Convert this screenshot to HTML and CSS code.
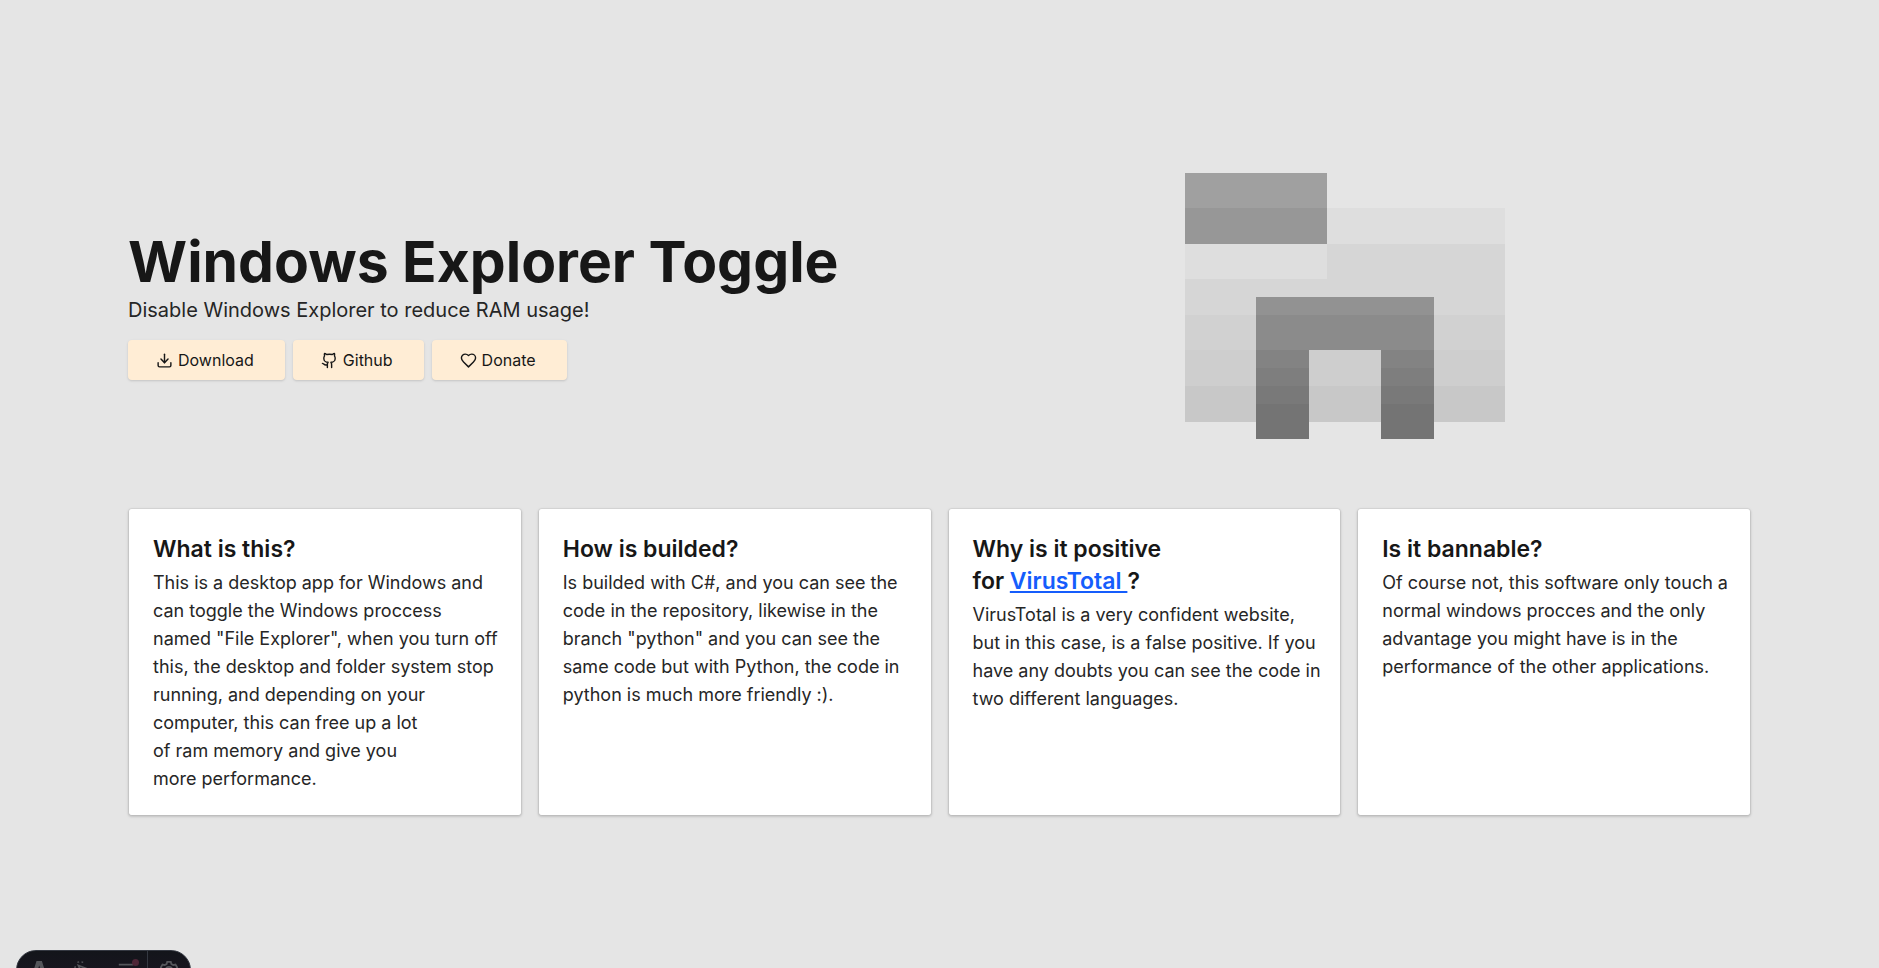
FILE: index.html
```html
<!DOCTYPE html>
<html lang="en">
<head>
<meta charset="UTF-8" />
<meta name="viewport" content="width=device-width, initial-scale=1" />
<title>Windows Explorer Toggle</title>
<link rel="stylesheet" href="styles.css">
</head>
<body>

<main>
  <section class="hero">
    <div class="intro">
      <h1>Windows Explorer Toggle</h1>
      <p>Disable Windows Explorer to reduce RAM usage!</p>
      <div class="actions">
        <button type="button">
          <svg viewBox="0 0 24 24" aria-hidden="true"><path d="M21 15v4a2 2 0 0 1-2 2H5a2 2 0 0 1-2-2v-4" /><path d="m7 10 5 5 5-5" /><path d="M12 15V3" /></svg>
          Download
        </button>
        <button type="button">
          <svg viewBox="0 0 24 24" aria-hidden="true"><path d="M15 22v-4a4.8 4.8 0 0 0-1-3.5c3 0 6-2 6-5.5.08-1.25-.27-2.48-1-3.5.28-1.15.28-2.35 0-3.5 0 0-1 0-3 1.5-2.64-.5-5.36-.5-8 0C6 2 5 2 5 2c-.3 1.15-.3 2.35 0 3.5A5.4 5.4 0 0 0 4 9c0 3.5 3 5.5 6 5.5-.39.49-.68 1.05-.85 1.65-.17.6-.22 1.23-.15 1.85v4" /><path d="M9 18c-4.51 2-5-2-7-2" /></svg>
          Github
        </button>
        <button type="button">
          <svg viewBox="0 0 24 24" aria-hidden="true"><path d="M19 14c1.49-1.46 3-3.21 3-5.5A5.5 5.5 0 0 0 16.5 3c-1.76 0-3 .5-4.5 2-1.5-1.5-2.74-2-4.5-2A5.5 5.5 0 0 0 2 8.5c0 2.3 1.5 4.05 3 5.5l7 7Z" /></svg>
          Donate
        </button>
      </div>
    </div>

    <!-- pixel folder, one unit per pixel -->
    <svg class="folder" viewBox="0 -1.5 18 18" shape-rendering="crispEdges" aria-hidden="true">
      <path fill="#dedede" d="M0 2h18v4H0z" />
      <path fill="#d6d6d6" d="M8 4h10v4H0V6h8z" />
      <path fill="#d1d1d1" d="M0 8h18v2H0z" />
      <path fill="#cecece" d="M0 10h18v2H0z" />
      <path fill="#c8c8c8" d="M0 12h18v2H0z" />
      <path fill="#a0a0a0" d="M0 0h8v2H0z" />
      <path fill="#979797" d="M0 2h8v2H0z" />
      <path fill="#929292" d="M4 7h10v1H4z" />
      <path fill="#8b8b8b" d="M4 8h10v2H4z" />
      <path fill="#838383" d="M4 10h3v1H4zM11 10h3v1h-3z" />
      <path fill="#7e7e7e" d="M4 11h3v1H4zM11 11h3v1h-3z" />
      <path fill="#797979" d="M4 12h3v1H4zM11 12h3v1h-3z" />
      <path fill="#747474" d="M4 13h3v2H4zM11 13h3v2h-3z" />
    </svg>
  </section>

  <section class="cards">
    <article class="card">
      <h2>What is this?</h2>
      <p>This is a desktop app for Windows and can toggle the Windows proccess named "File Explorer", when you turn off this, the desktop and folder system stop running, and depending on your computer, this can free up a lot of&nbsp;ram&nbsp;memory and give you more&nbsp;performance.</p>
    </article>
    <article class="card">
      <h2>How is builded?</h2>
      <p>Is builded with C#, and you can see the code in the repository, likewise in the branch "python" and you can see the same code but with Python, the code in python is much more friendly :).</p>
    </article>
    <article class="card">
      <h2>Why is it positive for&nbsp;<a href="#">VirusTotal&nbsp;</a>?</h2>
      <p>VirusTotal is a very confident website, but in this case, is a false positive. If you have any doubts you can see the code in two different languages.</p>
    </article>
    <article class="card">
      <h2>Is it bannable?</h2>
      <p>Of course not, this software only touch a normal windows procces and the only advantage you might have is in the performance of the other applications.</p>
    </article>
  </section>
</main>

<div class="toolbar">
  <button type="button" class="menu" aria-label="Menu">
    <svg viewBox="0 0 16 20" fill="currentColor" aria-hidden="true"><path d="M5 0h6L16 16c-2-.7-3.400-1.100-4.700-1.300L8 5l-3.200 9.700C3.300 14.900 2 15.300 0 16zM4 16c2 1.500 6 1.500 8 0 .6 2-1 3-4 4-3-1-4.500-2-4-4z" /></svg>
  </button>
  <button type="button" aria-label="Inspect">
    <svg class="line" viewBox="0 0 20 20" aria-hidden="true"><path d="m5 5 13 5-5.500 2-2 5.500zM2 7 .500 6.500M5 2 4.500.500M9 2l.5-1.500M1.500 10.500l1-.5" /></svg>
  </button>
  <button type="button" aria-label="Audit">
    <svg class="line" viewBox="0 0 20 20" aria-hidden="true"><path d="M2 4h16M2 10h8M2 16h6M16 9v6M16 17v1" /></svg>
    <span class="dot"></span>
  </button>
  <button type="button" class="settings" aria-label="Settings">
    <svg class="line" viewBox="0 0 20 20" aria-hidden="true"><path d="M8 1h4l.7 2.500 2 1.100L17.200 4l2 3.400-1.800 1.700v1.800l1.800 1.700-2 3.400-2.500-.6-2 1.100L12 19H8l-.7-2.500-2-1.100-2.500.6-2-3.400 1.800-1.700V9.100L.8 7.400l2-3.400 2.500.6 2-1.100z" /><circle cx="10" cy="10" r="3.500" /></svg>
  </button>
</div>

</body>
</html>
```
FILE: styles.css
```css
* {
  box-sizing: border-box;
}
body {
  margin: 0;
  min-height: 100vh;
  background: #e5e5e5;
  color: #171717;
  font-family: Inter, 'Segoe UI', sans-serif;
}
h1, h2, p {
  margin: 0;
}
button {
  font: inherit;
  color: inherit;
  border: none;
  cursor: pointer;
}
main {
  padding: 146px 128px;
}

.hero {
  display: grid;
  grid-template-columns: 1fr 1fr;
  align-items: center;
  margin-bottom: 42px;
}
.intro h1 {
  font-size: 57px;
  line-height: 60px;
  font-weight: 700;
}
.intro p {
  margin-top: 4px;
  font-size: 20px;
  line-height: 28px;
  color: #262626;
}
.actions {
  display: flex;
  gap: 8px;
  margin-top: 16px;
}
.actions button {
  display: flex;
  align-items: center;
  gap: 5px;
  height: 40px;
  padding: 0 31px 0 28px;
  background: #ffedd5;
  border-radius: 4px;
  font-size: 16px;
  box-shadow: 0 1px 3px rgba(0,0,0,0.1), 0 1px 2px rgba(0,0,0,0.06);
}
.actions button:hover {
  background: #fed7aa;
}
.actions svg {
  width: 17px;
  height: 17px;
  fill: none;
  stroke: currentColor;
  stroke-width: 2;
  stroke-linecap: round;
  stroke-linejoin: round;
}
.folder {
  width: 320px;
  height: 320px;
  justify-self: center;
}

.cards {
  display: grid;
  grid-template-columns: repeat(4, 1fr);
  gap: 16px;
}
.card {
  padding: 24px 18px 22px 24px;
  background: #fff;
  background-clip: padding-box;
  border: 1px solid rgba(0,0,0,0.03);
  border-radius: 4px;
  box-shadow: 0 1px 3px rgba(0,0,0,0.1), 0 1px 2px rgba(0,0,0,0.06);
}
.card h2 {
  font-size: 23px;
  line-height: 32px;
  font-weight: 600;
}
.card p {
  margin-top: 4px;
  font-size: 18px;
  line-height: 28px;
  color: #262626;
}
.card a {
  color: #155dfc;
  text-decoration: underline;
}

/* toolbar stays tucked under the bottom edge */
.toolbar {
  position: fixed;
  left: 16px;
  bottom: -22px;
  display: flex;
  height: 40px;
  overflow: hidden;
  background: linear-gradient(#13151a, #1c1624);
  border: 1px solid #343841;
  border-radius: 20px;
  color: #55565b;
}
.toolbar button {
  position: relative;
  display: flex;
  align-items: center;
  justify-content: center;
  width: 43px;
  padding: 0;
  background: none;
}
.toolbar .menu {
  width: 44px;
}
.toolbar svg {
  height: 18px;
}
.toolbar .line {
  fill: none;
  stroke: currentColor;
  stroke-width: 2;
}
.toolbar .settings {
  border-left: 1px solid #343841;
}
.toolbar .dot {
  position: absolute;
  top: 8px;
  right: 8px;
  width: 7px;
  height: 7px;
  border-radius: 50%;
  background: #4d2637;
}
```
